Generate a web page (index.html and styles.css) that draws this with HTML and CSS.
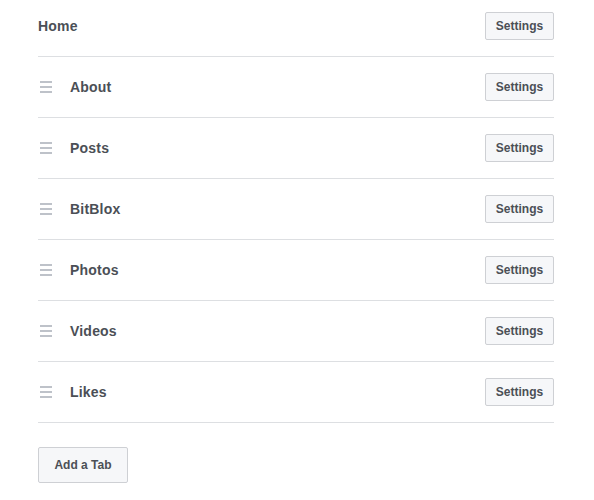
FILE: index.html
```html
<!DOCTYPE html>
<html>
<head>
<meta charset="utf-8">
<link rel="stylesheet" href="styles.css">
</head>
<body>
<div class="tabs">
  <div class="row first">
    <span class="label home">Home</span>
    <button class="btn">Settings</button>
  </div>
  <div class="row">
    <span class="handle"><i></i><i></i><i></i></span>
    <span class="label">About</span>
    <button class="btn">Settings</button>
  </div>
  <div class="row">
    <span class="handle"><i></i><i></i><i></i></span>
    <span class="label">Posts</span>
    <button class="btn">Settings</button>
  </div>
  <div class="row">
    <span class="handle"><i></i><i></i><i></i></span>
    <span class="label">BitBlox</span>
    <button class="btn">Settings</button>
  </div>
  <div class="row">
    <span class="handle"><i></i><i></i><i></i></span>
    <span class="label">Photos</span>
    <button class="btn">Settings</button>
  </div>
  <div class="row">
    <span class="handle"><i></i><i></i><i></i></span>
    <span class="label">Videos</span>
    <button class="btn">Settings</button>
  </div>
  <div class="row">
    <span class="handle"><i></i><i></i><i></i></span>
    <span class="label">Likes</span>
    <button class="btn">Settings</button>
  </div>
  <div class="footer">
    <button class="btn add">Add a Tab</button>
  </div>
</div>
</body>
</html>
```
FILE: styles.css
```css
html, body {
  margin: 0;
  padding: 0;
  background: #fff;
}
body {
  font-family: "Liberation Sans", Arial, Helvetica, sans-serif;
  color: #4b4f56;
}
.tabs {
  width: 516px;
  margin-left: 38px;
}
.row {
  display: flex;
  align-items: center;
  height: 60px;
  border-bottom: 1px solid #dddfe2;
}
.row.first {
  height: 56px;
  align-items: flex-start;
}
.row.first .label {
  margin-top: 18px;
}
.row.first .btn {
  margin-top: 12px;
}
.handle {
  display: flex;
  flex-direction: column;
  gap: 3px;
  width: 12px;
  margin-left: 2px;
  margin-right: 18px;
}
.handle i {
  display: block;
  height: 2px;
  background: #bec2c9;
}
.label {
  font-size: 14px;
  font-weight: bold;
  letter-spacing: 0.2px;
  color: #4b4f56;
  flex: 1;
}
.btn {
  margin-left: auto;
  font-family: "Liberation Sans", Arial, Helvetica, sans-serif;
  font-size: 12px;
  font-weight: bold;
  color: #4b4f56;
  background: #f6f7f9;
  border: 1px solid #ced0d4;
  border-radius: 2px;
  height: 28px;
  width: 69px;
  padding: 0;
  line-height: 26px;
  text-align: center;
  cursor: pointer;
}
.footer {
  padding-top: 24px;
}
.btn.add {
  margin-left: 0;
  height: 36px;
  width: 90px;
  line-height: 34px;
}
```
